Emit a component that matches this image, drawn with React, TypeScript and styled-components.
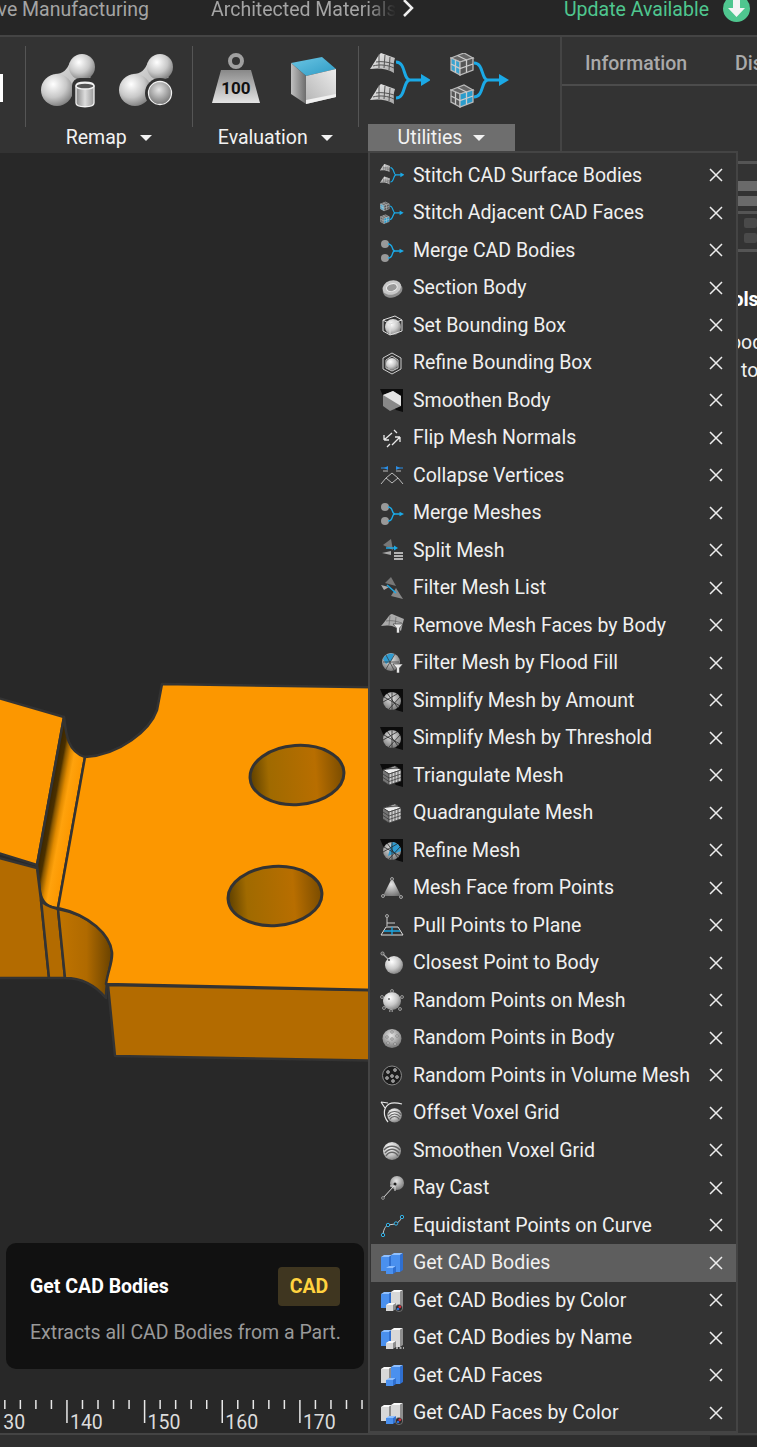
import React from 'react'
import styled, { createGlobalStyle } from 'styled-components'

const GlobalStyle = createGlobalStyle`
    html, body {
        margin: 0;
        background: #282828;
    }

    body {
        font-family: Roboto, "Liberation Sans", sans-serif;
    }
`

/* ---------- small drawing helpers ---------- */

const Ball = ({ x, y, r, fill = 'url(#ball)' }: { x: number; y: number; r: number; fill?: string }) => (
    <circle cx={x} cy={y} r={r} fill={fill} />
)

const Black = () => <path d="M0 1H23V24L16 22L3 8Z" fill="#0c0c0c" />

const MeshBall = ({ blue = false }: { blue?: boolean }) => (
    <g>
        <Ball x={12} y={13} r={9} fill="url(#ballDark)" />
        {blue && <path d="M12 4A9 9 0 0 1 21 13L8 18Z" fill="#2f9bd0" />}
        <path d="M4 9L20 18M7 5L18 20M3 14L17 6M9 21L20 9M12 4L12 22" stroke="#2a2a2a" strokeWidth=".8" fill="none" />
    </g>
)

const MeshCube = () => (
    <g stroke="#333" strokeWidth=".7">
        <path d="M3 7L15 3L21 7L9 11Z" fill="#eee" />
        <path d="M3 7L9 11V22L3 18Z" fill="#999" />
        <path d="M9 11L21 7V18L9 22Z" fill="#ccc" />
        <path d="M7 5.800L19 5.500M5 6.500L17 4.300M12 10V21M15 9V20M18 8V19M9 15L21 11M9 18.500L21 14.500M3 11L9 15M3 14.500L9 18.500M5 8.300V19.500M7 9.600V20.800" fill="none" />
    </g>
)

const Stripes = () => (
    <g>
        <Ball x={12} y={13} r={9} fill="url(#ball)" />
        <path d="M4 12C8 7 16 7 20 12M5 15C9 10 15 10 19 15M6 18C9 13 15 13 18 18" stroke="#666" strokeWidth="1.300" fill="none" />
    </g>
)

const Funnel = ({ x, y }: { x: number; y: number }) => (
    <path d={`M${x} ${y}H${x + 10}L${x + 6.500} ${y + 4}V${y + 9}H${x + 3.500}V${y + 4}Z`} fill="#e8e8e8" stroke="#333" strokeWidth=".6" />
)

const Box = ({ x, y, w, h, tone }: { x: number; y: number; w: number; h: number; tone: 'blue' | 'gray' }) => {
    const colors = tone === 'blue' ? ['#8fc0ff', '#4a90ee', '#2f6fd0'] : ['#fafafa', '#d8d8d8', '#8e8e8e']
    return (
        <g>
            <path d={`M${x} ${y}L${x + 3} ${y - 2}H${x + w + 3}L${x + w} ${y}Z`} fill={colors[0]} />
            <rect x={x} y={y} width={w} height={h} fill={colors[1]} />
            <path d={`M${x + w} ${y}L${x + w + 3} ${y - 2}V${y + h - 2}L${x + w} ${y + h}Z`} fill={colors[2]} />
        </g>
    )
}

const CadBoxes = ({ left, right, small }: { left: 'blue' | 'gray'; right: 'blue' | 'gray'; small: 'blue' | 'gray' }) => (
    <g>
        <Box x={1} y={6} w={8} h={14} tone={left} />
        <Box x={11} y={4} w={9} h={17} tone={right} />
        <Box x={6} y={17} w={7} h={6} tone={small} />
    </g>
)

const ColorDot = () => (
    <g>
        <circle cx={19} cy={20} r={3.600} fill="#2a2a2a" stroke="#999" strokeWidth=".6" />
        <circle cx={19.800} cy={18.800} r={1.400} fill="#d92b3a" />
        <circle cx={18} cy={21} r={1.300} fill="#2d6fd9" />
    </g>
)

const SurfaceGrid = ({ y }: { y: number }) => (
    <g transform={`translate(0 ${y})`}>
        <path d="M0 16C5 9 8 2 11 0L25 5C23 10 24 15 24 20C16 15 8 15 0 16Z" fill="url(#plate)" />
        <path d="M6 9C11 8 18 9 24 11M3 13C10 11 18 12 24 15M9 1L9 15M15 2L14 15M20 4L19 17" stroke="#555" strokeWidth="1" fill="none" />
    </g>
)

const GridCube = ({ y, flip }: { y: number; flip?: boolean }) => (
    <g transform={`translate(1 ${y})`} stroke="#bbb" strokeWidth="1.300">
        <path d="M0 5L13 0L22 5L9 9Z" fill="#666" />
        <path d="M0 5L9 9V22L0 17Z" fill={flip ? '#555' : '#3aa3d0'} />
        <path d="M9 9L22 5V17L9 22Z" fill={flip ? '#2a9ccc' : '#555'} />
        <path d="M4.500 7V19.500M15.500 7V19.500M0 11L9 15.500L22 11M6.500 2.500L15.500 7" fill="none" stroke="#ccc" />
    </g>
)

const MergeArrow = ({ top, bottom, x }: { top: number; bottom: number; x: number }) => {
    const mid = (top + bottom) / 2
    return (
        <g>
            <path
                d={`M${x} ${top}C${x + 10} ${top} ${x + 7} ${mid} ${x + 14} ${mid}C${x + 7} ${mid} ${x + 10} ${bottom} ${x} ${bottom}M${x + 14} ${mid}H${x + 27}`}
                stroke="#1ba9e6"
                strokeWidth="3"
                fill="none"
            />
            <path d={`M${x + 25} ${mid - 6}L${x + 35} ${mid}L${x + 25} ${mid + 6}Z`} fill="#1ba9e6" />
        </g>
    )
}

const SurfaceMerge = () => (
    <g>
        <SurfaceGrid y={0} />
        <SurfaceGrid y={31} />
        <MergeArrow top={9} bottom={45} x={26} />
    </g>
)

const CubeMerge = () => (
    <g>
        <GridCube y={0} />
        <GridCube y={32} flip />
        <MergeArrow top={10} bottom={44} x={24} />
    </g>
)

const Scaled = ({ children }: { children: React.ReactNode }) => <g transform="translate(0 1) scale(.4)">{children}</g>

const Merge = ({ children }: { children: React.ReactNode }) => (
    <g>
        {children}
        <path d="M8 6C14 6 11 13 15 13C11 13 14 20 8 20M15 13H20" stroke="#1ba9e6" strokeWidth="1.300" fill="none" />
        <path d="M19.500 10.800L24 13L19.500 15.200Z" fill="#1ba9e6" />
    </g>
)

const icons: Record<string, React.ReactNode> = {
    stitchSurface: <Scaled><SurfaceMerge /></Scaled>,
    stitchFaces: <Scaled><CubeMerge /></Scaled>,
    mergeBodies: <Merge><Ball x={5} y={6} r={4} fill="#999" /><Ball x={5} y={20} r={4} fill="#999" /></Merge>,
    section: (
        <g transform="rotate(-18 12 12)">
            <ellipse cx={12} cy={14} rx={10} ry={7.500} fill="#8e8e8e" />
            <ellipse cx={12} cy={11.500} rx={9.500} ry={7} fill="#c8c8c8" />
            <ellipse cx={12} cy={11.500} rx={5.500} ry={3.800} fill="#999" stroke="#eee" />
        </g>
    ),
    setBox: (
        <g>
            <Ball x={13} y={14} r={8} />
            <path d="M3 7L15 3L22 7L10 11ZM3 7V18L10 22V11M10 22L22 18V7" stroke="#ddd" strokeWidth="1" fill="none" />
        </g>
    ),
    refineBox: (
        <g>
            <Ball x={12} y={13} r={6} />
            <path d="M12 2L21 7V18L12 23L3 18V7ZM12 5L18 9V17L12 20L6 17V9Z" stroke="#ccc" strokeWidth="1" fill="none" />
        </g>
    ),
    smoothen: (
        <g>
            <Black />
            <path d="M3 7L13 3L21 8V18L10 23L3 18Z" fill="#888" />
            <path d="M3 7L13 3L21 8V18Z" fill="#e4e4e4" />
        </g>
    ),
    flip: (
        <path d="M4 14L12 7M4 14H9M4 14V9M20 11L12 19M20 11H15M20 11V16M14 4L17 7M10 18L7 21" stroke="#e8e8e8" strokeWidth="1.300" fill="none" />
    ),
    collapse: (
        <g>
            <path d="M1 21L6 15L12 20L18 15L23 21M6 15L12 10L18 15M3 8H8M21 8H16" stroke="#bbb" strokeWidth="1" fill="none" />
            <path d="M8 3L4 5L8 7ZM16 3L20 5L16 7Z" fill="#2a8fe8" />
            <path d="M1 5H6M18 5H23" stroke="#2a8fe8" strokeWidth="1.200" />
        </g>
    ),
    mergeMeshes: <Merge><Ball x={5} y={6} r={4} fill="#999" /><Ball x={5} y={20} r={4} fill="#999" /></Merge>,
    split: (
        <g>
            <path d="M11 1L3 7L13 12Z" fill="#777" />
            <path d="M11 13L2 15L11 17Z" fill="#aaa" />
            <path d="M6 10H16" stroke="#1ba9e6" strokeWidth="1.500" />
            <path d="M14 7.500L18 10L14 12.500Z" fill="#1ba9e6" />
            <path d="M14 15H23M14 18H23M14 21H23" stroke="#ddd" strokeWidth="1.300" />
        </g>
    ),
    filterList: (
        <g>
            <path d="M11 1L5 7L16 10Z" fill="#777" />
            <path d="M1 9L9 11L4 14Z" fill="#aaa" />
            <path d="M16 12L23 23L11 20Z" fill="#888" />
            <path d="M7 9L16 17" stroke="#1ba9e6" strokeWidth="1.500" />
        </g>
    ),
    removeFaces: (
        <g>
            <path d="M1 13C6 8 9 1 12 1L24 6C23 9 22 14 21 18C14 12 8 12 1 13Z" fill="#aaa" />
            <path d="M6 8C11 7 16 8 22 10M10 3L9 12M16 4L15 13" stroke="#666" strokeWidth=".7" fill="none" />
            <Funnel x={13} y={11} />
        </g>
    ),
    flood: (
        <g>
            <Ball x={11} y={11} r={9} fill="url(#ballDark)" />
            <path d="M3 8A9 9 0 0 1 14 3L12 9L6 13Z" fill="#2f9bd0" />
            <path d="M3 11L19 11M6 4L14 19M15 3L6 18" stroke="#333" strokeWidth=".7" />
            <Funnel x={13} y={13} />
        </g>
    ),
    simplifyAmount: <g><Black /><MeshBall /></g>,
    simplifyThreshold: <g><Black /><MeshBall /></g>,
    triangulate: <g><Black /><MeshCube /></g>,
    quadrangulate: <MeshCube />,
    refine: <g><Black /><MeshBall blue /></g>,
    faceFromPoints: (
        <g>
            <path d="M12 2L3 20H21Z" fill="url(#ballDark)" />
            <circle cx={12} cy={3} r={1.500} fill="#444" stroke="#ccc" strokeWidth=".7" />
            <circle cx={3} cy={20} r={1.500} fill="#444" stroke="#ccc" strokeWidth=".7" />
            <circle cx={21} cy={21} r={1.500} fill="#444" stroke="#ccc" strokeWidth=".7" />
        </g>
    ),
    pull: (
        <g>
            <path d="M1 22L6 14H18L23 22Z" fill="none" stroke="#ddd" strokeWidth="1" />
            <path d="M4 18H20M12 14V22" stroke="#1ba9e6" strokeWidth="1.300" />
            <path d="M7 3V13M7 10H15" stroke="#ccc" strokeWidth="1" />
            <circle cx={7} cy={3} r={1.500} fill="#444" stroke="#ccc" strokeWidth=".7" />
        </g>
    ),
    closest: (
        <g>
            <Ball x={14} y={14} r={9} />
            <path d="M2 2L9 9" stroke="#aaa" strokeWidth="1.200" />
            <circle cx={2.500} cy={2.500} r={1.600} fill="#555" stroke="#ccc" strokeWidth=".6" />
            <circle cx={9} cy={9} r={.9} fill="#333" />
        </g>
    ),
    randomMesh: (
        <g>
            <Ball x={12} y={13} r={9} />
            {[[12, 3], [2, 9], [22, 9], [4, 20], [20, 21], [11, 23]].map(([x, y]) => (
                <circle key={`${x}-${y}`} cx={x} cy={y} r={1.500} fill="#444" stroke="#ccc" strokeWidth=".6" />
            ))}
            <path d="M8 11H10" stroke="#333" />
        </g>
    ),
    randomBody: (
        <g>
            <Ball x={12} y={12.500} r={9.500} fill="url(#ballDark)" />
            {[[12, 6], [7, 11], [17, 10], [12, 13], [8, 17], [15, 18]].map(([x, y]) => (
                <circle key={`${x}-${y}`} cx={x} cy={y} r={1.200} fill="#eee" stroke="#555" strokeWidth=".6" />
            ))}
        </g>
    ),
    randomVolume: (
        <g>
            <circle cx={12} cy={12.500} r={9.500} fill="#1c1c1c" stroke="#888" />
            {[[8, 9], [15, 7], [12, 13], [17, 14], [7, 15], [13, 18]].map(([x, y]) => (
                <circle key={`${x}-${y}`} cx={x} cy={y} r={1.500} fill="#888" stroke="#ddd" strokeWidth=".5" />
            ))}
        </g>
    ),
    offset: (
        <g>
            <g transform="translate(5 4) scale(.8)"><Stripes /></g>
            <path d="M8 21C3 15 3 7 9 3C13 1 18 2 22 3M1 1L5 7M1 1L8 2" stroke="#e8e8e8" strokeWidth="1.200" fill="none" />
        </g>
    ),
    smoothenVoxel: <Stripes />,
    ray: (
        <g>
            <Ball x={17} y={7} r={7} fill="url(#ballDark)" />
            <circle cx={15} cy={8} r={1.500} fill="#222" />
            <path d="M3 22L14 10M10 10H15V15" stroke="#ddd" strokeWidth="1" fill="none" />
            <circle cx={3} cy={22} r={1.400} fill="#333" stroke="#ccc" strokeWidth=".6" />
        </g>
    ),
    curve: (
        <g fill="#2a2a2a" stroke="#35b5ea" strokeWidth="1">
            <path d="M3 21C4 15 6 13 8 12L15 11C18 10 20 8 22 4" fill="none" stroke="#cfcfcf" />
            <circle cx={3} cy={22} r={1.700} />
            <circle cx={8} cy={12} r={1.700} />
            <circle cx={16} cy={10.500} r={1.700} />
            <circle cx={22} cy={4} r={1.700} />
        </g>
    ),
    getBodies: <CadBoxes left="blue" right="blue" small="blue" />,
    bodiesByColor: <g><CadBoxes left="blue" right="gray" small="gray" /><ColorDot /></g>,
    bodiesByName: (
        <g>
            <CadBoxes left="blue" right="gray" small="gray" />
            <path d="M16 22H18M19.500 22H21.500M23 22H24" stroke="#ccc" strokeWidth="1.600" />
        </g>
    ),
    faces: <CadBoxes left="gray" right="blue" small="blue" />,
    facesByColor: <g><CadBoxes left="gray" right="gray" small="blue" /><ColorDot /></g>,
}

const menuItems: [string, string][] = [
    ['Stitch CAD Surface Bodies', 'stitchSurface'],
    ['Stitch Adjacent CAD Faces', 'stitchFaces'],
    ['Merge CAD Bodies', 'mergeBodies'],
    ['Section Body', 'section'],
    ['Set Bounding Box', 'setBox'],
    ['Refine Bounding Box', 'refineBox'],
    ['Smoothen Body', 'smoothen'],
    ['Flip Mesh Normals', 'flip'],
    ['Collapse Vertices', 'collapse'],
    ['Merge Meshes', 'mergeMeshes'],
    ['Split Mesh', 'split'],
    ['Filter Mesh List', 'filterList'],
    ['Remove Mesh Faces by Body', 'removeFaces'],
    ['Filter Mesh by Flood Fill', 'flood'],
    ['Simplify Mesh by Amount', 'simplifyAmount'],
    ['Simplify Mesh by Threshold', 'simplifyThreshold'],
    ['Triangulate Mesh', 'triangulate'],
    ['Quadrangulate Mesh', 'quadrangulate'],
    ['Refine Mesh', 'refine'],
    ['Mesh Face from Points', 'faceFromPoints'],
    ['Pull Points to Plane', 'pull'],
    ['Closest Point to Body', 'closest'],
    ['Random Points on Mesh', 'randomMesh'],
    ['Random Points in Body', 'randomBody'],
    ['Random Points in Volume Mesh', 'randomVolume'],
    ['Offset Voxel Grid', 'offset'],
    ['Smoothen Voxel Grid', 'smoothenVoxel'],
    ['Ray Cast', 'ray'],
    ['Equidistant Points on Curve', 'curve'],
    ['Get CAD Bodies', 'getBodies'],
    ['Get CAD Bodies by Color', 'bodiesByColor'],
    ['Get CAD Bodies by Name', 'bodiesByName'],
    ['Get CAD Faces', 'faces'],
    ['Get CAD Faces by Color', 'facesByColor'],
]

/* ---------- big ribbon icons ---------- */

const Blob = () => (
    <g>
        <path d="M14 20C22 20 26 16 29 8L50 24C40 24 35 30 32 44Z" fill="url(#neck)" />
        <Ball x={41} y={13} r={13} />
        <Ball x={16} y={36} r={16} />
    </g>
)

const CylinderRemap = () => (
    <svg width="54" height="54" viewBox="0 0 54 54">
        <Blob />
        <rect x="31" y="24" width="25" height="32" rx="8" fill="#333" />
        <path d="M35 32C35 27 53 27 53 32V49C53 54 35 54 35 49Z" fill="url(#cyl)" stroke="#f2f2f2" strokeWidth="1.300" />
        <ellipse cx="44" cy="32" rx="9" ry="3" fill="#555" stroke="#f2f2f2" strokeWidth="1.300" />
    </svg>
)

const SphereRemap = () => (
    <svg width="54" height="54" viewBox="0 0 54 54">
        <Blob />
        <circle cx="41" cy="39" r="15" fill="#333" />
        <Ball x={41} y={39} r={11} fill="url(#ballDark)" />
        <circle cx="41" cy="39" r="11.500" fill="none" stroke="#f2f2f2" strokeWidth="1.300" />
    </svg>
)

const WeightIcon = () => (
    <svg width="48" height="56" viewBox="0 0 48 56">
        <circle cx="24" cy="8" r="6" fill="none" stroke="#a0a0a0" strokeWidth="4" />
        <path d="M9 17H39L48 50H0Z" fill="url(#weight)" />
        <text x="24" y="41" textAnchor="middle" fontFamily="Roboto, sans-serif" fontWeight="700" fontSize="17" fill="#111">100</text>
    </svg>
)

const CubeIcon = () => (
    <svg width="46" height="50" viewBox="0 0 46 50">
        <path d="M1 7L32 1L46 13L16 20Z" fill="url(#cubeTop)" />
        <path d="M1 7L16 20V48L1 38Z" fill="url(#cubeLeft)" />
        <path d="M16 20L46 13V41L16 48Z" fill="url(#cubeRight)" />
        <path d="M16 44L46 38V41L16 48Z" fill="#f0f0f0" />
    </svg>
)

const Defs = () => (
    <DefsSvg>
        <defs>
            <radialGradient id="ball" cx=".38" cy=".32" r=".75">
                <stop offset="0" stopColor="#fff" />
                <stop offset=".55" stopColor="#c8c8c8" />
                <stop offset="1" stopColor="#767676" />
            </radialGradient>
            <radialGradient id="ballDark" cx=".45" cy=".35" r=".75">
                <stop offset="0" stopColor="#e6e6e6" />
                <stop offset="1" stopColor="#6a6a6a" />
            </radialGradient>
            <linearGradient id="neck" x1="0" y1="0" x2="1" y2="1">
                <stop offset="0" stopColor="#dcdcdc" />
                <stop offset="1" stopColor="#a8a8a8" />
            </linearGradient>
            <linearGradient id="plate" x1="0" y1="0" x2="1" y2="1">
                <stop offset="0" stopColor="#f4f4f4" />
                <stop offset="1" stopColor="#a4a4a4" />
            </linearGradient>
            <linearGradient id="cyl" x1="0" y1="0" x2="1" y2="0">
                <stop offset="0" stopColor="#888" />
                <stop offset=".5" stopColor="#ddd" />
                <stop offset="1" stopColor="#999" />
            </linearGradient>
            <linearGradient id="weight" x1="0" y1="0" x2="0" y2="1">
                <stop offset="0" stopColor="#888" />
                <stop offset="1" stopColor="#e4e4e4" />
            </linearGradient>
            <linearGradient id="cubeTop" x1="0" y1="0" x2="1" y2="1">
                <stop offset="0" stopColor="#6cc6e4" />
                <stop offset="1" stopColor="#2d9ac4" />
            </linearGradient>
            <linearGradient id="cubeLeft" x1="0" y1="0" x2="1" y2="0">
                <stop offset="0" stopColor="#c0c0c0" />
                <stop offset="1" stopColor="#6c6c6c" />
            </linearGradient>
            <linearGradient id="cubeRight" x1="0" y1="1" x2="1" y2="0">
                <stop offset="0" stopColor="#b4b4b4" />
                <stop offset="1" stopColor="#ececec" />
            </linearGradient>
            <linearGradient id="fillet" gradientUnits="userSpaceOnUse" x1="51" y1="790" x2="78" y2="795">
                <stop offset="0" stopColor="#3a2600" />
                <stop offset=".2" stopColor="#4a3000" />
                <stop offset=".28" stopColor="#8a5800" />
                <stop offset=".45" stopColor="#e08a00" />
                <stop offset=".6" stopColor="#ffa20c" />
                <stop offset="1" stopColor="#fc9700" />
            </linearGradient>
            <linearGradient id="scoop" gradientUnits="userSpaceOnUse" x1="58" y1="0" x2="110" y2="0">
                <stop offset="0" stopColor="#c07400" />
                <stop offset=".55" stopColor="#b06a00" />
                <stop offset="1" stopColor="#6e4500" />
            </linearGradient>
            <linearGradient id="hole" x1="0" y1="0" x2="1" y2="0">
                <stop offset="0" stopColor="#5e4000" />
                <stop offset=".2" stopColor="#a06a00" />
                <stop offset=".7" stopColor="#b86e00" />
                <stop offset="1" stopColor="#7a4c00" />
            </linearGradient>
        </defs>
    </DefsSvg>
)

/* the viewBox is in page coordinates, the canvas starts at y 153 */
const PartModel = () => (
    <ModelSvg viewBox="0 153 560 1280">
        <g stroke="#333" strokeWidth="2.500" strokeLinejoin="round">
            <path d="M-5 697L64 717L37 865L-5 852Z" fill="#fc9700" />
            <path d="M64 717C66 735 68 752 85 757L58 908C48 908 42 902 40 892L37 865Z" fill="url(#fillet)" />
            <path d="M-5 857L37 868L41 900L49 978H-5Z" fill="#b36b00" />
            <path d="M41 900C44 905 50 907 58 909L65 978H49Z" fill="#b36b00" />
            <path d="M58 909C90 915 110 935 112 952C112 965 106 975 106 998C95 985 80 978 65 978Z" fill="url(#scoop)" />
            <path d="M108 985L560 994V1064L115 1056Z" fill="#b36b00" />
            <path
                d="M162 684L560 690V994L106 984C108 970 113 962 112 952C110 935 90 915 58 908L85 757C120 755 150 730 157 710Z"
                fill="#fc9700"
            />
            <ellipse cx="297" cy="775" rx="47" ry="29.500" strokeWidth="3" transform="rotate(-4 297 775)" fill="url(#hole)" />
            <ellipse cx="275" cy="896" rx="47" ry="29.500" strokeWidth="3" transform="rotate(-4 275 896)" fill="url(#hole)" />
        </g>
    </ModelSvg>
)

const Ruler = () => {
    const step = 77.65 / 5
    const ticks = Array.from({ length: 25 }, (_, i) => -10.7 + i * step)
    return (
        <RulerSvg viewBox="0 0 560 33">
            {ticks.map((x, i) => (
                <line key={i} x1={x} x2={x} y1="0" y2={i % 5 === 0 ? 23 : 9} stroke="#e8e8e8" strokeWidth="1.500" />
            ))}
            {ticks.filter((_, i) => i % 5 === 0).map((x, i) => (
                <text key={i} x={x + 3} y="29" fontFamily="Roboto, sans-serif" fontSize="19.5" fill="#dcdcdc">{130 + i * 10}</text>
            ))}
        </RulerSvg>
    )
}

const CloseIcon = () => (
    <svg width="14" height="14" viewBox="0 0 14 14">
        <path d="M1 1L13 13M13 1L1 13" stroke="#eee" strokeWidth="1.500" />
    </svg>
)

const App = () => (
    <Page>
        <GlobalStyle />
        <Defs />

        <TopBar>
            <TopTab $first>Additive Manufacturing</TopTab>
            <TopTab $fade>Architected Materials</TopTab>
            <svg width="12" height="18" viewBox="0 0 12 18">
                <path d="M2 0L10 8L2 16" stroke="#eee" strokeWidth="2.500" fill="none" />
            </svg>
            <UpdateLabel>Update Available</UpdateLabel>
            <UpdateBadge>
                <svg width="27" height="27" viewBox="0 0 27 27">
                    <circle cx="13.500" cy="13.500" r="13.500" fill="#4fc68f" />
                    <path d="M10 5H17V13H22L13.500 22L5 13H10Z" fill="#f4f4f4" />
                </svg>
            </UpdateBadge>
        </TopBar>

        <Workspace>
            <MainColumn>
                <Ribbon>
                    <StubGroup>
                        <StubIcon />
                    </StubGroup>

                    <RibbonGroup>
                        <GroupIcons $gap={24}>
                            <CylinderRemap />
                            <SphereRemap />
                        </GroupIcons>
                        <GroupLabel>Remap<Caret /></GroupLabel>
                    </RibbonGroup>

                    <RibbonGroup>
                        <GroupIcons $gap={30}>
                            <WeightIcon />
                            <CubeIcon />
                        </GroupIcons>
                        <GroupLabel>Evaluation<Caret /></GroupLabel>
                    </RibbonGroup>

                    <RibbonGroup>
                        <GroupIcons $gap={20}>
                            <svg width="60" height="56" viewBox="0 0 60 56"><SurfaceMerge /></svg>
                            <svg width="60" height="56" viewBox="0 0 60 56"><CubeMerge /></svg>
                        </GroupIcons>
                        <DropdownAnchor>
                            <GroupLabel $open>Utilities<Caret /></GroupLabel>
                            <Menu>
                                {menuItems.map(([label, icon]) => (
                                    <MenuRow key={label} $active={label === 'Get CAD Bodies'}>
                                        <MenuIcon viewBox="0 0 24 24">{icons[icon]}</MenuIcon>
                                        <MenuText>{label}</MenuText>
                                        <CloseIcon />
                                    </MenuRow>
                                ))}
                            </Menu>
                        </DropdownAnchor>
                    </RibbonGroup>
                </Ribbon>

                <Viewport>
                    <PartModel />
                    <Tooltip>
                        <TooltipHead>
                            <TooltipTitle>Get CAD Bodies</TooltipTitle>
                            <TagBadge>CAD</TagBadge>
                        </TooltipHead>
                        <TooltipText>Extracts all CAD Bodies from a Part.</TooltipText>
                    </Tooltip>
                    <Ruler />
                </Viewport>
            </MainColumn>

            <SidePanel>
                <PanelTabs>
                    <PanelTab>Information</PanelTab>
                    <PanelTab>Display</PanelTab>
                </PanelTabs>
                <PanelBody>
                    <PanelRule $after={17} />
                    <PanelBar />
                    <PanelBar />
                    <PanelRule $after={4} />
                    <PanelChip />
                    <PanelChip />
                    <PanelRule $before={1} $after={36} />
                    <PanelHeading>Tools</PanelHeading>
                    <PanelLine $indent={137} $before={18}>good</PanelLine>
                    <PanelLine $indent={159}>to</PanelLine>
                </PanelBody>
            </SidePanel>
        </Workspace>

        <StatusBar>
            <StatusBlock />
        </StatusBar>
    </Page>
)

export default App

const DefsSvg = styled.svg`
    display: block;
    width: 0;
    height: 0;
`

const Page = styled.div`
    display: flex;
    flex-direction: column;
    width: 757px;
    height: 1447px;
    overflow: hidden;
    background: #282828;
`

const TopBar = styled.div`
    flex: 0 0 37px;
    display: flex;
    align-items: flex-start;
    box-sizing: border-box;
    background: #262626;
    border-bottom: 2px solid #444;
    overflow: hidden;
    font-size: 19.5px;
    line-height: 20px;
`

const TopTab = styled.div<{ $first?: boolean; $fade?: boolean }>`
    color: #a4a4a4;
    white-space: nowrap;
    margin-left: ${({ $first }) => ($first ? '-53px' : '62px')};
    ${({ $fade }) => $fade && `
        width: 185px;
        margin-right: 6px;
        overflow: hidden;
        -webkit-mask-image: linear-gradient(to right, #000 84%, transparent);
        mask-image: linear-gradient(to right, #000 84%, transparent);
    `}
`

const UpdateLabel = styled.div`
    margin-left: auto;
    color: #4fc68f;
    white-space: nowrap;
`

const UpdateBadge = styled.div`
    margin: -5px 7px 0 14px;
    height: 27px;
`

const Workspace = styled.div`
    flex: 1;
    min-height: 0;
    display: flex;
`

const MainColumn = styled.div`
    flex: 0 0 560px;
    display: flex;
    flex-direction: column;
`

const Ribbon = styled.div`
    flex: 0 0 116px;
    display: flex;
    background: #333;
    padding-top: 9px;
    box-sizing: border-box;
`

const StubGroup = styled.div`
    flex: 0 0 25px;
    padding-top: 28px;
`

const StubIcon = styled.div`
    width: 3px;
    height: 28px;
    background: #fff;
`

const RibbonGroup = styled.div`
    flex: 0 0 166.5px;
    display: flex;
    flex-direction: column;
`

const GroupIcons = styled.div<{ $gap: number }>`
    height: 81px;
    box-sizing: border-box;
    border-left: 1.5px solid #555;
    display: flex;
    align-items: center;
    justify-content: center;
    gap: ${({ $gap }) => $gap}px;
    padding: 0 3px 11px 0;
`

const GroupLabel = styled.div<{ $open?: boolean }>`
    display: flex;
    align-items: center;
    justify-content: center;
    gap: ${({ $open }) => ($open ? '11px' : '13px')};
    box-sizing: border-box;
    height: 27px;
    margin-top: -3px;
    margin-left: ${({ $open }) => ($open ? '0' : '1px')};
    color: #f2f2f2;
    font-size: 19.5px;
    background: ${({ $open }) => ($open ? '#6e6e6e' : 'transparent')};
`

const Caret = styled.span`
    width: 0;
    height: 0;
    border-left: 6px solid transparent;
    border-right: 6px solid transparent;
    border-top: 6px solid #f2f2f2;
`

const DropdownAnchor = styled.div`
    position: relative;
    width: 147px;
    margin-left: 10px;
`

const Menu = styled.div`
    position: absolute;
    top: 24px;
    left: 0;
    z-index: 5;
    display: flex;
    flex-direction: column;
    box-sizing: border-box;
    width: 370px;
    height: 1282px;
    padding: 3.5px 0 0 1px;
    background: #333;
    border: 2px solid #444;
`

const MenuRow = styled.div<{ $active?: boolean }>`
    flex: 0 0 37.5px;
    display: flex;
    align-items: center;
    gap: 9px;
    padding: 0 13px 0 9px;
    color: #f0f0f0;
    font-size: 19.5px;
    background: ${({ $active }) => ($active ? '#5e5e5e' : 'transparent')};
`

const MenuIcon = styled.svg`
    flex: 0 0 24px;
    width: 24px;
    height: 24px;
`

const MenuText = styled.span`
    flex: 1;
    white-space: nowrap;
`

const Viewport = styled.div`
    position: relative;
    flex: 1;
    min-height: 0;
    display: flex;
    flex-direction: column;
    justify-content: flex-end;
    background: #282828;
`

const ModelSvg = styled.svg`
    position: absolute;
    top: 0;
    left: 0;
    width: 560px;
    height: 1280px;
`

const Tooltip = styled.div`
    position: relative;
    box-sizing: border-box;
    width: 358px;
    height: 126px;
    margin: 0 0 31px 6px;
    padding: 24px;
    background: #111;
    border-radius: 10px;
`

const TooltipHead = styled.div`
    display: flex;
    align-items: center;
    justify-content: space-between;
`

const TooltipTitle = styled.div`
    color: #fff;
    font-size: 19.5px;
    font-weight: 700;
`

const TagBadge = styled.div`
    width: 62px;
    height: 39px;
    display: flex;
    align-items: center;
    justify-content: center;
    color: #ffd23f;
    font-size: 19.5px;
    font-weight: 700;
    background: #3f3620;
    border-radius: 4px;
`

const TooltipText = styled.div`
    margin-top: 15px;
    color: #999;
    font-size: 19.5px;
    line-height: 23px;
    white-space: nowrap;
`

const RulerSvg = styled.svg`
    display: block;
    flex: 0 0 33px;
    width: 560px;
    height: 33px;
`

const SidePanel = styled.div`
    flex: 1;
    min-width: 0;
    background: #333;
    border-left: 2px solid #444;
    overflow: hidden;
`

const PanelTabs = styled.div`
    display: flex;
    align-items: center;
    gap: 48px;
    box-sizing: border-box;
    height: 49px;
    padding: 6px 0 0 23px;
    border-bottom: 2px solid #4c4c4c;
`

const PanelTab = styled.div`
    color: #aaa;
    font-size: 19.5px;
    font-weight: 500;
    white-space: nowrap;
`

const PanelBody = styled.div`
    display: flex;
    flex-direction: column;
    padding: 75px 0 0 20px;
`

const PanelRule = styled.div<{ $before?: number; $after: number }>`
    height: 3px;
    background: #555;
    margin: ${({ $before }) => $before || 0}px 0 ${({ $after }) => $after}px;
`

const PanelBar = styled.div`
    height: 10px;
    background: #6a6a6a;
    margin-bottom: 5px;
`

const PanelChip = styled.div`
    height: 10px;
    margin: 0 0 5px 162px;
    background: #4a4a4a;
    border-radius: 2px;
`

const PanelHeading = styled.div`
    padding-left: 129px;
    color: #fff;
    font-size: 19.5px;
    font-weight: 700;
    line-height: 23px;
    white-space: nowrap;
`

const PanelLine = styled.div<{ $indent: number; $before?: number }>`
    padding-left: ${({ $indent }) => $indent}px;
    margin-top: ${({ $before }) => $before || 0}px;
    color: #f0f0f0;
    font-size: 19.5px;
    line-height: 28px;
    white-space: nowrap;
`

const StatusBar = styled.div`
    flex: 0 0 14px;
    box-sizing: border-box;
    border-top: 2px solid #444;
    background: #2f2f2f;
    display: flex;
    justify-content: flex-end;
`

const StatusBlock = styled.div`
    width: 47px;
    margin-top: 1px;
    background: #262626;
`
